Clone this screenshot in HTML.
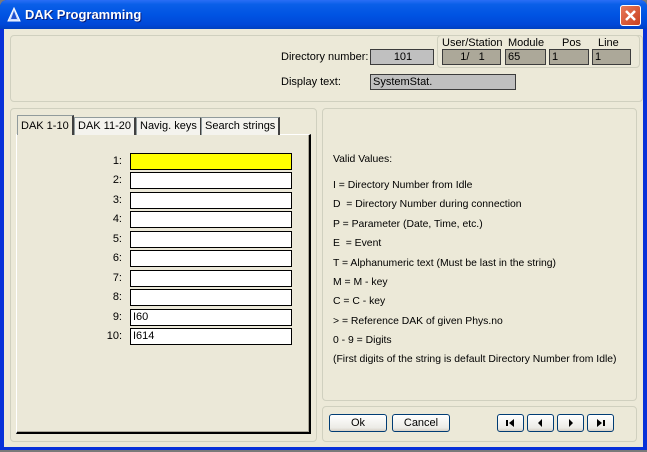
<!DOCTYPE html>
<html><head><style>
*{margin:0;padding:0;box-sizing:border-box}
body{width:647px;height:452px;background:#7a7a7a;font-family:"Liberation Sans",sans-serif;font-size:11px;color:#000;position:relative;overflow:hidden}
.win{position:absolute;left:0;top:0;width:647px;height:450px;background:#0831d9;border-radius:7px 7px 0 0}
.title{position:absolute;left:0;top:0;width:647px;height:29px;border-radius:7px 7px 0 0;background:linear-gradient(#2a6ef5 0%,#0a5fe8 15%,#0054e3 50%,#0048d8 85%,#0040c0 100%)}
.title span{position:absolute;left:25px;top:7px;color:#fff;font-weight:bold;font-size:13px;text-shadow:1px 1px #0a1e7a}
.close{position:absolute;left:620px;top:5px;width:21px;height:21px;border:1px solid #fff;border-radius:3px;background:linear-gradient(135deg,#e8795a,#c8401e)}
.client{position:absolute;left:4px;top:29px;width:639px;height:418px;background:#ECE9D8}
.a{position:absolute}
.grp{position:absolute;border:1px solid #d0d0bf;border-radius:4px}
.box{position:absolute;background:#c0c0c0;border:1px solid #3c3c3c;height:16px;line-height:14px;padding-left:2px}
.in{position:absolute;left:130px;width:162px;height:17px;background:#fff;border:1px solid #000;line-height:15px;padding-left:2px}
.lbl{position:absolute;width:40px;left:82px;text-align:right}
.tab{position:absolute;top:117px;height:18px;border:1px solid #919b9c;border-bottom:none;border-right:2px solid #404040;background:#f4f3ee;padding:2px 3px 0 3px;white-space:nowrap}
.btn{position:absolute;top:414px;height:18px;border:1px solid #003c74;border-radius:3px;background:linear-gradient(#fff,#ecebe6 80%,#d6d0c5);text-align:center;line-height:16px}
.t{position:absolute;left:333px;font-size:10.4px}
</style></head><body>
<div class="win"></div>
<div class="title"><svg class="a" style="left:7px;top:7px" width="14" height="15"><polygon points="7,1 13,14 1,14" fill="#c8d8ff" stroke="#fff" stroke-width="1"/><polygon points="7,4 10,12 4,12" fill="#2050d0"/></svg><span>DAK Programming</span>
<div class="close"><svg width="19" height="19"><path d="M5 5L14 14M14 5L5 14" stroke="#fff" stroke-width="2.5"/></svg></div></div>
<div class="client"></div>
<div class="grp" style="left:10px;top:35px;width:633px;height:67px"></div>
<div class="grp" style="left:437px;top:35px;width:203px;height:33px"></div>
<div class="a" style="left:281px;top:51px">Directory number:</div>
<div class="box" style="left:370px;top:49px;width:64px;text-align:center">101</div>
<div class="a" style="left:442px;top:37px">User/Station</div>
<div class="a" style="left:508px;top:37px">Module</div>
<div class="a" style="left:562px;top:37px">Pos</div>
<div class="a" style="left:598px;top:37px">Line</div>
<div class="box" style="left:442px;top:49px;width:59px;background:#aca899;text-align:center">1/&nbsp;&nbsp;&nbsp;1</div>
<div class="box" style="left:505px;top:49px;width:41px;background:#aca899">65</div>
<div class="box" style="left:549px;top:49px;width:40px;background:#aca899">1</div>
<div class="box" style="left:592px;top:49px;width:39px;background:#aca899">1</div>
<div class="a" style="left:281px;top:76px">Display text:</div>
<div class="box" style="left:370px;top:74px;width:146px">SystemStat.</div>
<div class="grp" style="left:10px;top:108px;width:307px;height:334px"></div>
<div class="grp" style="left:322px;top:108px;width:315px;height:293px"></div>
<div class="grp" style="left:322px;top:406px;width:315px;height:36px"></div>
<div class="a" style="left:16px;top:134px;width:295px;height:300px;background:#ebe8d8;border-left:1px solid #fff;border-top:1px solid #fff;border-right:2px solid #000;border-bottom:2px solid #000;box-shadow:inset -1px -1px #aca899"></div>
<div class="tab" style="left:17px;top:115px;height:20px;background:#ebe8d8;border-bottom:none;z-index:2;padding-top:4px">DAK 1-10</div>
<div class="tab" style="left:74px">DAK 11-20</div>
<div class="tab" style="left:136px">Navig. keys</div>
<div class="tab" style="left:201px">Search strings</div>
<div class="lbl" style="top:155px">1:</div><div class="in" style="top:153px;background:#ffff00"></div>
<div class="lbl" style="top:174px">2:</div><div class="in" style="top:172px"></div>
<div class="lbl" style="top:194px">3:</div><div class="in" style="top:192px"></div>
<div class="lbl" style="top:213px">4:</div><div class="in" style="top:211px"></div>
<div class="lbl" style="top:233px">5:</div><div class="in" style="top:231px"></div>
<div class="lbl" style="top:252px">6:</div><div class="in" style="top:250px"></div>
<div class="lbl" style="top:272px">7:</div><div class="in" style="top:270px"></div>
<div class="lbl" style="top:291px">8:</div><div class="in" style="top:289px"></div>
<div class="lbl" style="top:311px">9:</div><div class="in" style="top:309px">I60</div>
<div class="lbl" style="top:330px">10:</div><div class="in" style="top:328px">I614</div>
<div class="t" style="top:154px">Valid Values:</div>
<div class="t" style="top:180px">I = Directory Number from Idle</div>
<div class="t" style="top:199px">D&nbsp; = Directory Number during connection</div>
<div class="t" style="top:219px">P = Parameter (Date, Time, etc.)</div>
<div class="t" style="top:238px">E&nbsp; = Event</div>
<div class="t" style="top:258px">T = Alphanumeric text (Must be last in the string)</div>
<div class="t" style="top:277px">M = M - key</div>
<div class="t" style="top:296px">C = C - key</div>
<div class="t" style="top:316px">&gt; = Reference DAK of given Phys.no</div>
<div class="t" style="top:335px">0 - 9 = Digits</div>
<div class="t" style="top:354px">(First digits of the string is default Directory Number from Idle)</div>
<div class="btn" style="left:329px;width:58px">Ok</div>
<div class="btn" style="left:392px;width:58px">Cancel</div>
<div class="btn" style="left:497px;width:27px"><svg width="25" height="16"><rect x="8" y="5" width="2" height="6"/><polygon points="16,4 16,12 11,8"/></svg></div>
<div class="btn" style="left:527px;width:27px"><svg width="25" height="16"><polygon points="14,4 14,12 10,8"/></svg></div>
<div class="btn" style="left:557px;width:27px"><svg width="25" height="16"><polygon points="11,4 11,12 15,8"/></svg></div>
<div class="btn" style="left:587px;width:27px"><svg width="25" height="16"><polygon points="9,4 9,12 14,8"/><rect x="15" y="5" width="2" height="6"/></svg></div>
</body></html>
